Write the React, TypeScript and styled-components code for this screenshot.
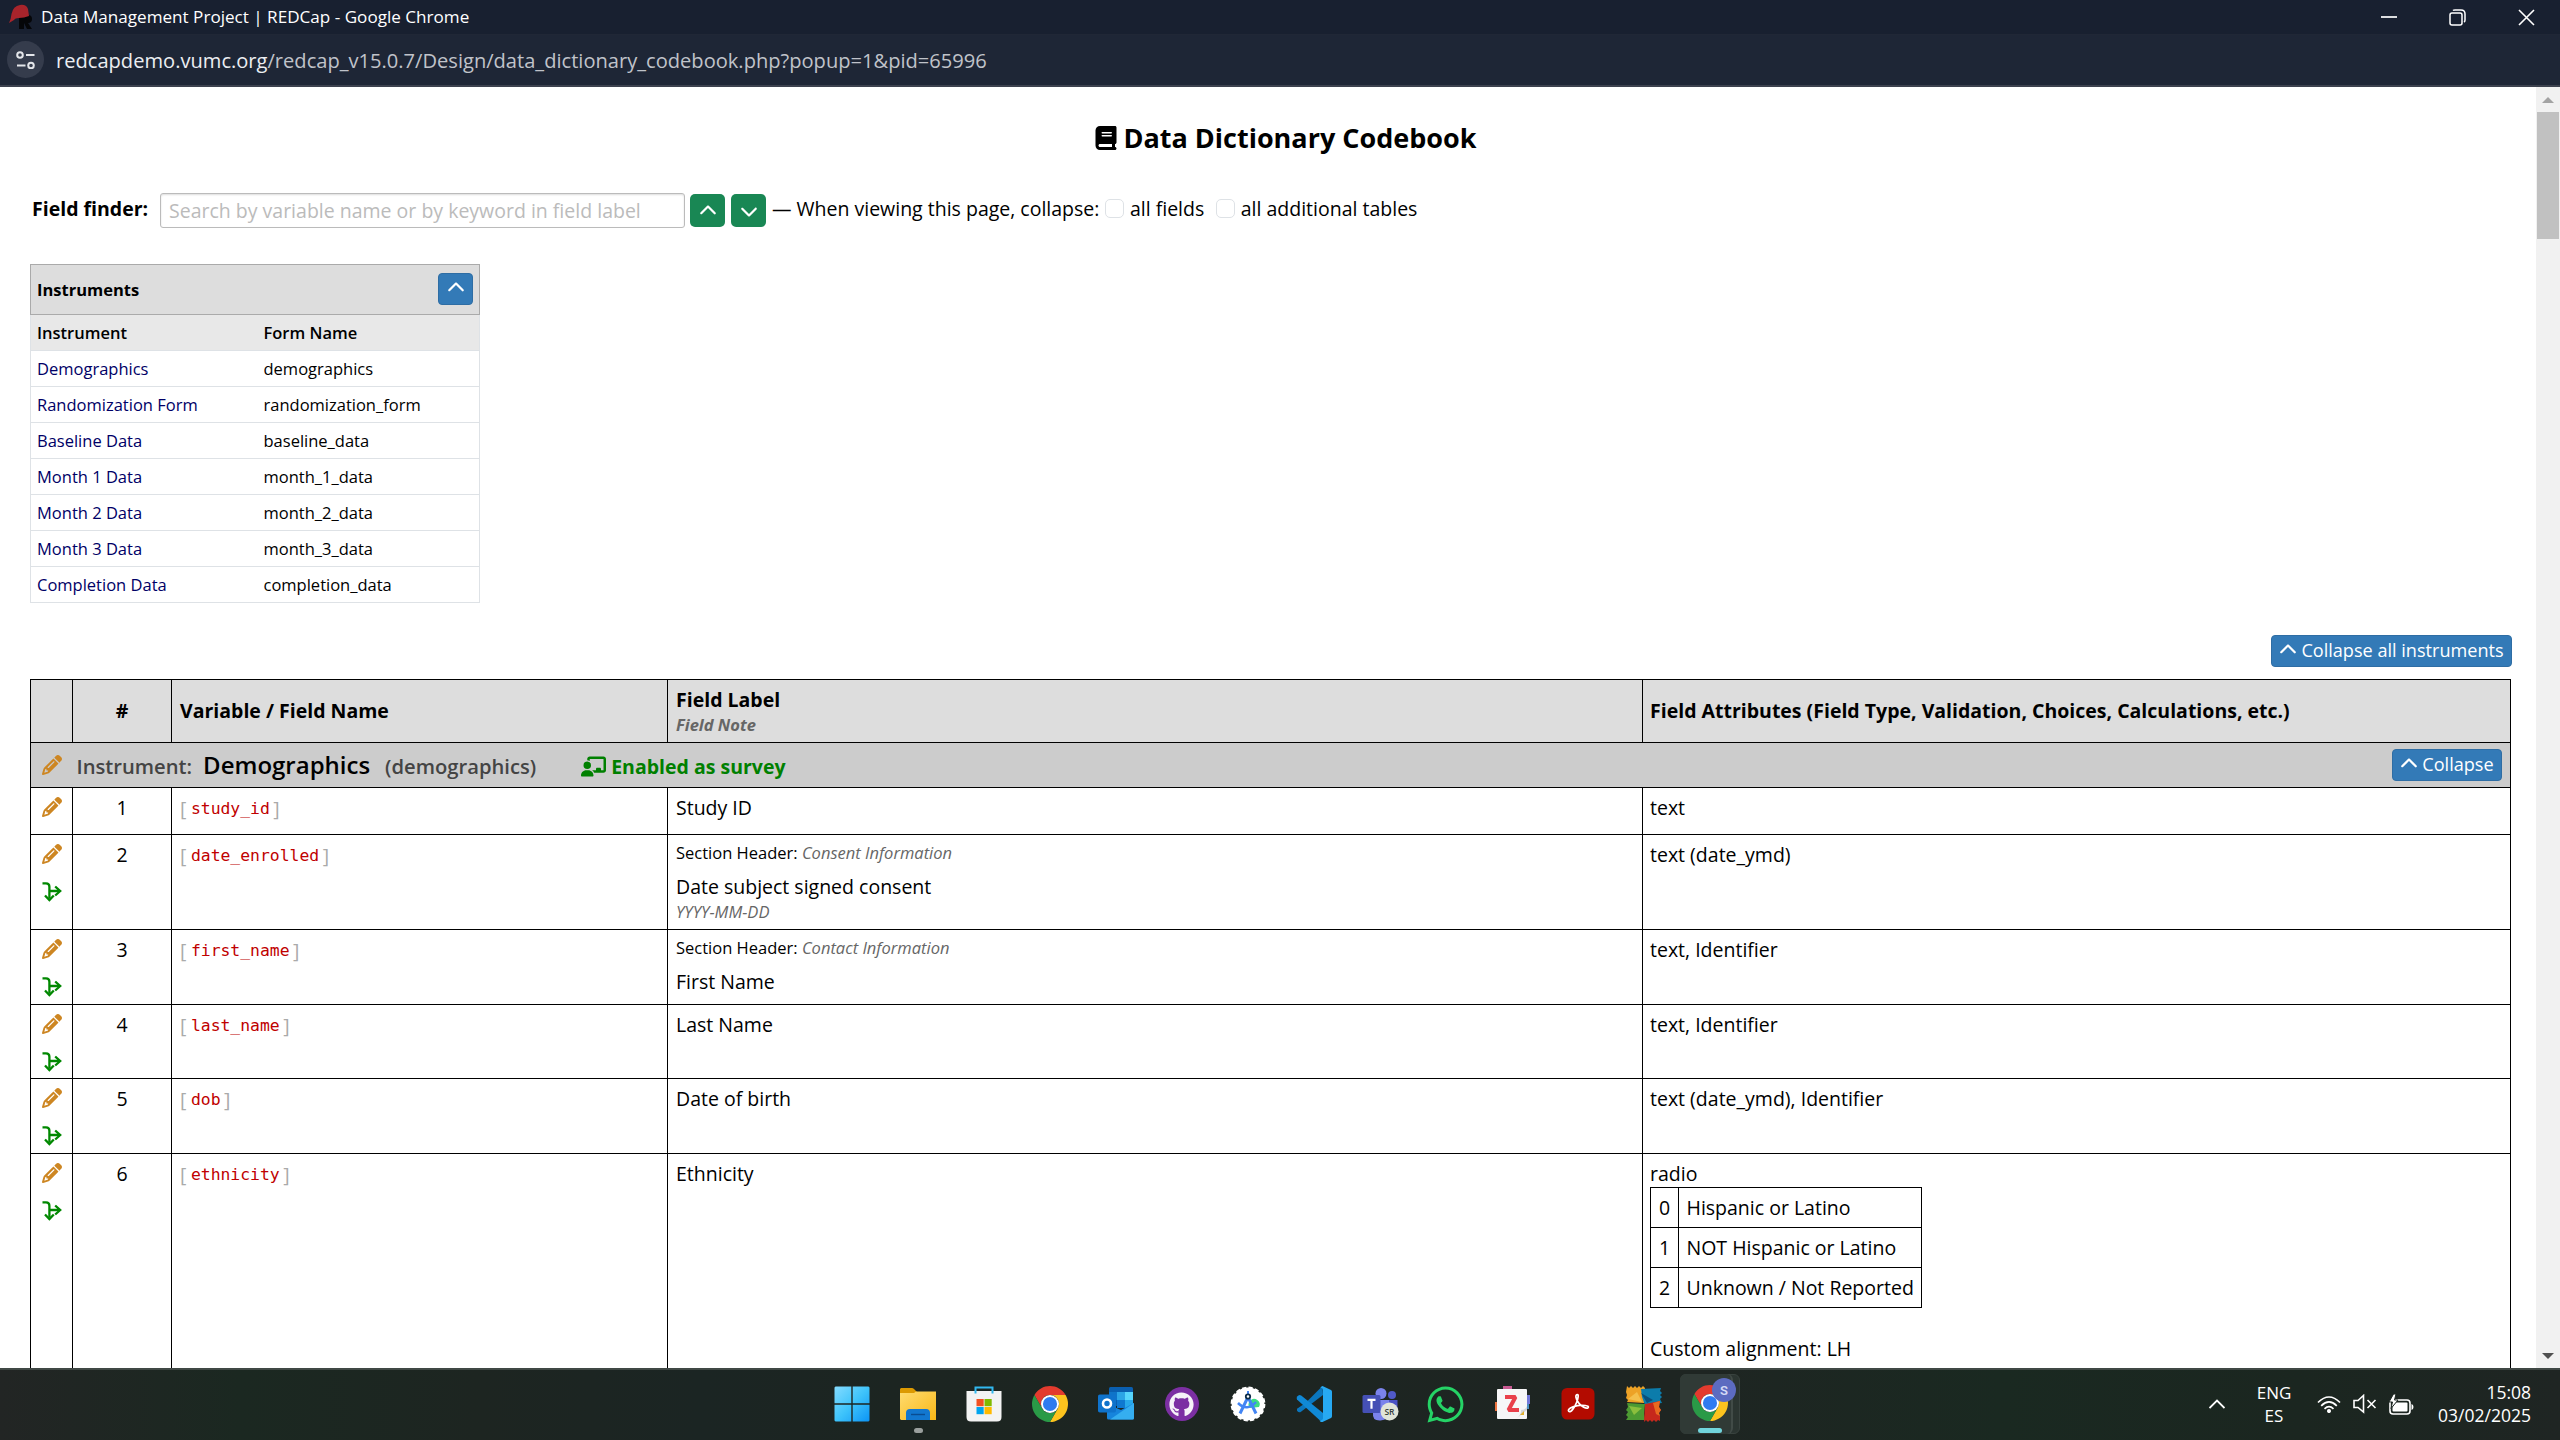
import React from "react";
import styled, { createGlobalStyle } from "styled-components";
import {
  FaBook,
  FaPencil,
  FaChevronUp,
  FaChevronDown,
  FaChalkboardUser,
  FaGithub,
  FaWhatsapp,
} from "react-icons/fa6";

const GlobalStyle = createGlobalStyle`
  * { box-sizing: border-box; }
  html, body { margin: 0; padding: 0; overflow: hidden; }
  body {
    font-family: "Open Sans", "Noto Sans", sans-serif;
    font-size: 19.5px;
    color: #000;
    background: #fff;
  }
`;

/* ---------- window frame ---------- */

const Screen = styled.div`
  width: 2560px;
  height: 1440px;
  display: flex;
  flex-direction: column;
  overflow: hidden;
`;

const TitleBar = styled.header`
  height: 35px;
  flex: none;
  display: flex;
  align-items: center;
  justify-content: space-between;
  background: #182030;
  color: #fff;
  border-bottom: 1px solid #202736;
`;

const WindowTitle = styled.div`
  display: flex;
  align-items: center;
  gap: 8px;
  padding-left: 9px;
  font-size: 17.1px;
  line-height: 36px;
  white-space: nowrap;
`;

const WindowControls = styled.div`
  display: flex;
  align-items: center;
  gap: 52px;
  padding-right: 25px;
`;

const AddressBar = styled.div`
  height: 52px;
  flex: none;
  display: flex;
  align-items: center;
  gap: 12px;
  padding: 0 0 1px 7px;
  background: #1e2636;
  border-bottom: 2px solid #3c414e;
`;

const SiteInfo = styled.div`
  width: 37px;
  height: 37px;
  border-radius: 50%;
  background: #353c4c;
  display: grid;
  place-items: center;
`;

const Url = styled.div`
  font-size: 20.1px;
  padding-top: 1px;
  color: #c0c3ca;
  white-space: nowrap;
`;

const UrlHost = styled.span`
  color: #eceef2;
`;

const Viewport = styled.div`
  height: 1281px;
  flex: none;
  display: flex;
  overflow: hidden;
`;

const Page = styled.main`
  flex: 1;
  min-width: 0;
  padding-left: 30px;
  padding-right: 25px;
  overflow: hidden;
`;

const Scrollbar = styled.div`
  width: 24px;
  flex: none;
  height: 100%;
  display: flex;
  flex-direction: column;
  align-items: center;
  justify-content: space-between;
  background: #f1f1f1;
`;

const ScrollStart = styled.div`
  width: 100%;
  display: flex;
  flex-direction: column;
  align-items: center;
`;

const ScrollArrow = styled.div<{ $down?: boolean }>`
  height: 25px;
  width: 24px;
  display: grid;
  place-items: center;
  &::before {
    content: "";
    border: 6px solid transparent;
    border-top-width: ${(p) => (p.$down ? "6px" : "0")};
    border-bottom-width: ${(p) => (p.$down ? "0" : "6px")};
    border-${(p) => (p.$down ? "top" : "bottom")}-color: ${(p) => (p.$down ? "#505050" : "#a3a3a3")};
  }
`;

const ScrollThumb = styled.div`
  width: 22px;
  height: 127px;
  background: #c1c1c1;
`;

/* ---------- page head ---------- */

const PageTitle = styled.h1`
  margin: 30px 0 0;
  height: 42px;
  display: flex;
  align-items: center;
  justify-content: center;
  gap: 5px;
  padding-left: 30px;
  font-size: 27px;
  font-weight: 700;
  line-height: 42px;
  white-space: nowrap;
`;

const FinderRow = styled.div`
  display: flex;
  align-items: center;
  height: 35px;
  margin-top: 34px;
  padding-left: 2px;
  white-space: nowrap;
`;

const FinderLabel = styled.label`
  width: 128px;
  font-weight: 700;
  margin-top: -4px;
`;

const FinderInput = styled.input`
  width: 525px;
  height: 35px;
  padding: 0 8px 1px;
  font: inherit;
  border: 1px solid #bbb;
  border-radius: 3px;
  box-shadow: inset 0 1px 2px #ddd;
  &::placeholder {
    color: #bbb;
    opacity: 1;
  }
`;

const StepButton = styled.button<{ $gap: number }>`
  width: 35px;
  height: 33px;
  margin-left: ${(p) => p.$gap}px;
  padding: 0;
  border: 0;
  border-radius: 5px;
  background: #198754;
  color: #fff;
  display: grid;
  place-items: center;
`;

const FinderText = styled.span<{ $gap: number }>`
  margin: -4px 0 0 ${(p) => p.$gap}px;
`;

const CheckBox = styled.span<{ $gap: number }>`
  width: 19px;
  height: 19px;
  margin: -4px 0 0 ${(p) => p.$gap}px;
  border: 1px solid #dee2e6;
  border-radius: 5px;
`;

/* ---------- buttons ---------- */

const BlueButton = styled.button<{ $width: number }>`
  width: ${(p) => p.$width}px;
  height: 32px;
  flex: none;
  display: flex;
  align-items: center;
  justify-content: center;
  gap: 4px;
  padding: 0 0 2px;
  font: inherit;
  font-size: 18.1px;
  font-weight: 400;
  color: #fff;
  background: #337ab7;
  border: 1px solid #2e6da4;
  border-radius: 4px;
  white-space: nowrap;
`;

/* ---------- instruments ---------- */

const Instruments = styled.section`
  width: 450px;
  margin-top: 36px;
  font-size: 16.5px;
`;

const InstrumentsHead = styled.div`
  height: 51px;
  display: flex;
  align-items: center;
  justify-content: space-between;
  padding: 0 6px 1px 6px;
  background: #ddd;
  border: 1px solid #aaa;
  font-weight: 700;
`;

const InstrumentRow = styled.div<{ $head?: boolean }>`
  height: 36px;
  display: grid;
  grid-template-columns: 226.5px 1fr;
  align-items: center;
  padding: 0 0 0 6px;
  border: 1px solid #dee2e6;
  border-top: 0;
  background: ${(p) => (p.$head ? "#e8e8e8" : "#fff")};
  font-weight: ${(p) => (p.$head ? 600 : 400)};
`;

const InstrumentLink = styled.a`
  color: #000066;
`;

/* ---------- codebook table ---------- */

const Toolbar = styled.div`
  display: flex;
  justify-content: flex-end;
  margin: 32px -1px 12px 0;
`;

const Codebook = styled.section`
  width: 2481px;
  border-top: 1px solid #000;
  border-left: 1px solid #000;
`;

const FieldRow = styled.div<{ $height: number; $head?: boolean }>`
  height: ${(p) => p.$height}px;
  display: grid;
  grid-template-columns: 42px 99px 496px 975px 868px;
  border-bottom: 1px solid #000;
  background: ${(p) => (p.$head ? "#ddd" : "#fff")};
  font-weight: ${(p) => (p.$head ? 700 : 400)};
`;

const Cell = styled.div<{ $center?: boolean; $middle?: boolean; $last?: boolean }>`
  border-right: 1px solid #000;
  padding: ${(p) => (p.$middle ? "0 8px 2px" : "5px 8px 0")};
  padding-left: ${(p) => (p.$last ? 7 : 8)}px;
  text-align: ${(p) => (p.$center ? "center" : "left")};
  line-height: 29px;
  display: flex;
  flex-direction: column;
  justify-content: ${(p) => (p.$middle ? "center" : "flex-start")};
  min-width: 0;
`;

const IconCell = styled.div`
  border-right: 1px solid #000;
  padding: 9px 0 0 11px;
  display: flex;
  flex-direction: column;
  gap: 18px;
`;

const Pencil = styled(FaPencil)`
  width: 20px;
  height: 20px;
  color: #cd8622;
  flex: none;
`;

const Variable = styled.div`
  display: flex;
  gap: 3.5px;
  padding-top: 1px;
  color: #aaa;
`;

const VariableName = styled.code`
  margin-left: 1px;
  font-family: "DejaVu Sans Mono", monospace;
  font-size: 16.4px;
  color: #c00000;
`;

const HeadNote = styled.span`
  font-size: 16.5px;
  font-style: italic;
  color: #666;
  line-height: 21px;
`;

const HeadLabel = styled.span`
  line-height: 28px;
`;

const SectionHeader = styled.div`
  font-size: 16.5px;
  line-height: 25px;
  margin: -0.5px 0 7px;
`;

const SectionName = styled.i`
  color: #666;
`;

const FieldNote = styled.div`
  font-size: 16.5px;
  font-style: italic;
  color: #666;
  line-height: 22px;
`;

const InstrumentBar = styled.div`
  height: 45px;
  display: flex;
  align-items: center;
  padding: 0 8px 0 11px;
  background: #ccc;
  border-right: 1px solid #000;
  border-bottom: 1px solid #000;
  white-space: nowrap;
`;

const BarMuted = styled.span<{ $gap: number }>`
  margin: 2px 0 0 ${(p) => p.$gap}px;
  font-size: 20.2px;
  font-weight: 600;
  color: #444;
`;

const BarName = styled.span`
  margin: -1px 0 0 11px;
  font-size: 24px;
  font-weight: 600;
`;

const SurveyFlag = styled.span`
  margin-left: 45px;
  margin-right: auto;
  display: flex;
  align-items: center;
  gap: 5px;
  padding-top: 2px;
  font-weight: 700;
  color: #008000;
`;

const Choices = styled.div`
  width: 272px;
  margin-top: -1px;
  border: 1px solid #000;
  border-bottom: 0;
`;

const Choice = styled.div`
  height: 40px;
  display: grid;
  grid-template-columns: 28px 1fr;
  border-bottom: 1px solid #000;
  line-height: 39px;
  white-space: nowrap;
`;

const ChoiceCode = styled.span`
  border-right: 1px solid #000;
  text-align: center;
`;

const ChoiceLabel = styled.span`
  padding-left: 7.5px;
`;

const Extra = styled.div`
  margin-top: 26px;
`;

/* ---------- taskbar ---------- */

const Taskbar = styled.footer`
  flex: 1;
  display: flex;
  align-items: flex-start;
  justify-content: space-between;
  border-top: 2px solid #404845;
  background: linear-gradient(90deg, #222524 0, #1b2821 240px, #1d2521 480px, #1b2523 700px, #1c2521 900px, #1e2522 1700px, #1a2921 2000px, #1b2620 2300px, #1f2523 2560px);
  color: #fff;
  padding-left: 818.5px;
`;

const Apps = styled.nav`
  display: flex;
  height: 70px;
`;

const AppSlot = styled.div`
  position: relative;
  width: 66px;
  height: 68px;
  display: flex;
  align-items: center;
  justify-content: center;
`;

const ActiveTile = styled.div`
  width: 60px;
  height: 60px;
  margin: 4px 0 0 3.5px;
  display: flex;
  justify-content: center;
  align-items: center;
  border-radius: 6px;
  background: #2b3531;
  border: 1px solid #38423e;
  position: relative;
  &::before {
    content: "";
    position: absolute;
    inset: -1px 6px -1px -1px;
    border-radius: 6px;
    border-right: 2px solid #414b47;
    background: #303a36;
  }
  &::after {
    content: "";
    position: absolute;
    left: 17px;
    bottom: 0;
    width: 24px;
    height: 5px;
    border-radius: 3px;
    background: #71d4dc;
  }
  svg {
    position: relative;
    top: -4px;
    left: 4px;
  }
`;

const RunningDot = styled.div`
  position: absolute;
  left: 29px;
  bottom: 5px;
  width: 9px;
  height: 5px;
  border-radius: 3px;
  background: #9a9f9d;
`;

const Tray = styled.div`
  display: flex;
  align-items: center;
  height: 68px;
  padding-right: 29px;
`;

const TrayText = styled.div<{ $align: string; $width: number; $size: number }>`
  width: ${(p) => p.$width}px;
  text-align: ${(p) => p.$align};
  font-size: ${(p) => p.$size}px;
  line-height: 23.5px;
  white-space: nowrap;
`;

const TrayIcons = styled.div`
  display: flex;
  align-items: center;
  gap: 12px;
  margin: 0 21px 0 -6px;
`;

/* ---------- drawings ---------- */

const BranchIcon = () => (
  <svg width="20" height="20" viewBox="0 0 20 20" fill="none" stroke="#008800" strokeWidth="2.3">
    <path d="M0.5 1.3H4q3.4 0 3.4 3.4V16.5M7.4 9H17" />
    <path d="M3 13.5l4.4 4.6 4.4-4.6M13.2 4.500l5 4.600-5 4.400" />
  </svg>
);

const RedcapLogo = () => (
  <svg width="24" height="26" viewBox="0 0 24 26">
    <path d="M11 11h8q4 0 4 4t-4 4l4 6h-5l-3-6v6h-5V13z" fill="#050608" />
    <path d="M0 19Q2 15 2.500 10 4 2 11 1q6-1 8 4l1 7q-5 2-10 2-4 0-5 2z" fill="#a8242b" />
  </svg>
);

const TuneIcon = () => (
  <svg width="19" height="18" viewBox="0 0 19 18" fill="none" stroke="#e4e6ea" strokeWidth="2">
    <circle cx="4" cy="4" r="2.800" />
    <path d="M10 4h8.500M1 14.500h8.500" />
    <circle cx="15" cy="14.500" r="2.800" />
  </svg>
);

const MinimizeIcon = () => (
  <svg width="16" height="16" viewBox="0 0 16 16">
    <path d="M0 8h16" stroke="#fff" strokeWidth="1.700" />
  </svg>
);

const RestoreIcon = () => (
  <svg width="17" height="17" viewBox="0 0 17 17" fill="none" stroke="#fff" strokeWidth="1.500">
    <rect x="1" y="4" width="12" height="12" rx="2" />
    <path d="M4 1.500Q4.500 1 6 1h6q4 0 4 4v6q0 1.500-1 2" />
  </svg>
);

const CloseIcon = () => (
  <svg width="17" height="17" viewBox="0 0 17 17">
    <path d="M1 1l15 15M16 1L1 16" stroke="#fff" strokeWidth="1.600" />
  </svg>
);

const StartIcon = () => (
  <svg width="36" height="36" viewBox="0 0 36 36">
    <defs>
      <linearGradient id="win" x1="0" y1="0" x2="36" y2="36" gradientUnits="userSpaceOnUse">
        <stop offset="0" stopColor="#86dcff" />
        <stop offset="0.5" stopColor="#3fc4fb" />
        <stop offset="1" stopColor="#0a93f5" />
      </linearGradient>
    </defs>
    <path fill="url(#win)" d="M1.500.5H17.300V17.300H.500V1.500zM18.700.500H34.500l1 1V17.300H18.700zM.500 18.700H17.300V35.500H1.500l-1-1zM18.700 18.700H35.500V34.500l-1 1H18.700z" />
  </svg>
);

const FolderIcon = () => (
  <svg width="36" height="36" viewBox="0 0 36 36">
    <defs>
      <linearGradient id="fold" x1="0" y1="0" x2="1" y2="1">
        <stop offset="0" stopColor="#ffdc70" />
        <stop offset="1" stopColor="#f9b716" />
      </linearGradient>
    </defs>
    <path d="M1 2h11q1 0 2 1l3 3-4 5H0V3z" fill="#dc9a02" />
    <path d="M0 7h14l2-1.500h20V34H1l-1-1z" fill="url(#fold)" />
    <path d="M6 34v-7q0-4 4-4h16q4 0 4 4v7z" fill="#1277cf" />
    <path d="M11 28.500h14" stroke="#0a4c91" strokeWidth="1.400" />
  </svg>
);

const StoreIcon = () => (
  <svg width="36" height="36" viewBox="0 0 36 36">
    <path d="M9.500 7V1.500h17V7" fill="none" stroke="#31b8ef" strokeWidth="2" />
    <path d="M.500 5h35v26q0 4.500-4.500 4.500H5Q.500 35.500.500 31z" fill="#f3f3f3" />
    <path d="M10.500 13h7.200v7.200h-7.200z" fill="#f25022" />
    <path d="M18.500 13h7.200v7.200h-7.200z" fill="#7fba00" />
    <path d="M10.500 21h7.200v7.200h-7.200z" fill="#00a4ef" />
    <path d="M18.500 21h7.200v7.200h-7.200z" fill="#ffb900" />
    <path d="M9.500 5v2.500M26.500 5v2.500" stroke="#31b8ef" strokeWidth="2" />
  </svg>
);

const ChromeShapes = () => (
  <>
    <path d="M3.220 12A24 24 0 0 1 44.780 12H24A12 12 0 0 0 13.600 30z" fill="#e33b2e" />
    <path d="M44.780 12A24 24 0 0 1 24 48L34.400 30A12 12 0 0 0 24 12z" fill="#fcc31e" />
    <path d="M24 48A24 24 0 0 1 3.220 12L13.600 30A12 12 0 0 0 34.400 30z" fill="#2a9a47" />
    <circle cx="24" cy="24" r="12" fill="#fff" />
    <circle cx="24" cy="24" r="9.400" fill="#2f7bf0" />
  </>
);

const ChromeIcon = () => (
  <svg width="36" height="36" viewBox="0 0 48 48">
    <ChromeShapes />
  </svg>
);

const ChromeProfileIcon = () => (
  <svg width="44" height="46" viewBox="0 0 44 46">
    <g transform="translate(0 8) scale(.75)">
      <ChromeShapes />
    </g>
    <circle cx="32" cy="13" r="12" fill="#5c6bc0" />
    <text x="32" y="17.500" textAnchor="middle" fontSize="13" fontWeight="600" fill="#d5daf5" fontFamily="Roboto, sans-serif">
      S
    </text>
  </svg>
);

const OutlookIcon = () => (
  <svg width="36" height="36" viewBox="0 0 36 36">
    <path d="M11 2.500q0-1.500 1.500-1.500h21q1.500 0 1.500 1.500V20H11z" fill="#0a5fb0" />
    <path d="M11 6h8v8h-8z" fill="#0f74c8" />
    <path d="M19 6h8v8h-8z" fill="#2ba4e6" />
    <path d="M27 6h8v8h-8z" fill="#56d5fc" />
    <path d="M19 14h8v8h-8z" fill="#0f78d0" />
    <path d="M27 14h8v8h-8z" fill="#28a8ea" />
    <path d="M9 18l14 6 13-7v15q0 1.500-1.500 1.500H10.500Q9 33.500 9 32z" fill="#1684dc" />
    <path d="M36 17L12 33.500h22.500q1.500 0 1.500-1.500z" fill="#35aef0" />
    <rect x="0" y="8.500" width="18" height="18" rx="1.800" fill="#0f73cc" />
    <circle cx="9" cy="17.500" r="4" fill="none" stroke="#fff" strokeWidth="2.600" />
  </svg>
);

const GithubDisc = styled.div`
  width: 34px;
  height: 34px;
  border-radius: 50%;
  display: grid;
  place-items: center;
  color: #f6f2f8;
  background: #7c2fa3;
`;

const AndroidStudioIcon = () => (
  <svg width="36" height="36" viewBox="0 0 36 36">
    <circle cx="18" cy="18" r="16.400" fill="#fff" stroke="#fff" strokeWidth="2" strokeDasharray="4.200 2.240" />
    <path d="M20 22a5.500 5.500 0 1 1 9-1z" fill="#3ddc84" />
    <path d="M18 11L10 27.500M18 11l8 16.500" stroke="#4285f4" strokeWidth="3" />
    <path d="M8 17q9 9 18-1" fill="none" stroke="#4285f4" strokeWidth="2.600" />
    <path d="M18 5v4" stroke="#4285f4" strokeWidth="2" />
    <circle cx="18" cy="10.500" r="2.200" fill="#fff" stroke="#0b2b45" strokeWidth="1.800" />
  </svg>
);

const VsCodeIcon = () => (
  <svg width="36" height="36" viewBox="0 0 36 36">
    <path d="M26.500 0L9.500 17 1 22.800v2q2 2.500 4 1L27 9z" fill="#0b76bd" />
    <path d="M1.200 10.500q1.800-2.500 4-1L27 27v9l-3.500-2L1 13.500q-.800-1.500.200-3z" fill="#1089d6" />
    <path d="M26.500 0L35 4q1 .500 1 1.800v24.500q0 1.200-1 1.700l-8.500 4q-2 .500-3-1.500 3 .500 3.500-2V4Q26.500 1 24 1.500z" fill="#27a9f2" />
  </svg>
);

const TeamsIcon = () => (
  <svg width="38" height="36" viewBox="0 0 38 36">
    <circle cx="20" cy="7.500" r="5.500" fill="#7b83eb" />
    <circle cx="31" cy="9" r="4" fill="#5059c9" />
    <path d="M26 14h10.500v10q0 5-5 5T26 24z" fill="#4a52c4" />
    <path d="M12 14h16v11q0 9-8.500 9.500T12 27z" fill="#7b83eb" />
    <rect x="1.500" y="9" width="18" height="18" rx="1.500" fill="#4550b5" />
    <path d="M6.500 13.800h8M10.500 13.800v9" stroke="#fff" strokeWidth="2.200" />
    <circle cx="28.500" cy="25.500" r="9" fill="#e0e4d8" />
    <text x="28.500" y="28.800" textAnchor="middle" fontSize="8.500" fontWeight="600" fill="#38403a" fontFamily="Open Sans, sans-serif">
      SR
    </text>
  </svg>
);

const ZoteroIcon = () => (
  <svg width="36" height="36" viewBox="0 0 36 36">
    <path d="M9 0h9v5H9z" fill="#c75a92" />
    <path d="M29 9h7v9h-7z" fill="#7277d8" />
    <path d="M29 18h6v5h-6z" fill="#4a8fc2" />
    <path d="M1 16h6v9H1z" fill="#ee7440" />
    <path d="M4 3h28q1 0 1 1v28q0 1-1 1H4q-1 0-1-1V4q0-1 1-1z" fill="#f6f6f7" />
    <path d="M33 20q-1 4-6 4 1 4-5 9l11-9z" fill="#d3d4d8" />
    <path d="M27 28l3-3v4h-4z" fill="#e0b030" />
    <path d="M11 11h10.500L14.500 24H25" fill="none" stroke="#e9404b" strokeWidth="4" strokeLinejoin="bevel" />
  </svg>
);

const AcrobatIcon = () => (
  <svg width="34" height="34" viewBox="0 0 34 34">
    <rect x="0.500" y="1" width="33" height="31.500" rx="5.500" fill="#b30b00" />
    <path
      d="M16.500 7.500c-2.800 0-1.600 4.600 1 8.300 2.700 3.800 8 6.600 9.600 4.800 1.700-2-5.600-2.900-10.600-1.900-5.400 1-10.400 3.500-8.800 5.500 2 2.200 6-4 8-9 1.500-3.800 2-7.700.8-7.700z"
      fill="none"
      stroke="#fff"
      strokeWidth="1.700"
    />
  </svg>
);

const AvgIcon = () => (
  <svg width="36" height="36" viewBox="0 0 36 36">
    <path d="M1 0l2 2 2-2 2 2 2-2 2 2 2-2 2 2 2-2 2 2-1 15-17-1 1-2-2-2 1-3-1-3z" fill="#eda226" />
    <path d="M15 3l20-1-1 3 2 2-2 2 2 2-2 2 2 4-17 2-3-8z" fill="#0c7cab" />
    <path d="M1 17l18 1-1 10 1 6H0l2-3-2-2 2-3-2-2 2-3z" fill="#4c9a32" />
    <path d="M19 18l15-3-1 6 2 3-2 3 1 3v5l-2-1-2 2-2-2-2 2-2-2-2 2-2-2-2 2z" fill="#c6281c" />
    <path d="M27 17l7-2-1 6 2 3-2 3 1 3-4-2z" fill="#e86a20" />
    <path d="M2 13l14 3-5-10z" fill="#f4bf4b" />
    <path d="M3 20l13 2-8 7z" fill="#8bbf3d" />
    <path d="M15 7l6 10 6-3z" fill="#0a4f7a" />
  </svg>
);

const TrayChevron = () => (
  <svg width="16" height="10" viewBox="0 0 16 10">
    <path d="M0.500 9L8 1.500 15.500 9" fill="none" stroke="#fff" strokeWidth="1.800" />
  </svg>
);

const WifiIcon = () => (
  <svg width="24" height="18" viewBox="0 0 24 18" fill="none" stroke="#fff" strokeWidth="1.700">
    <path d="M1 7.500Q12-3.500 23 7.500M4.200 10.800q7.800-7.800 15.600 0M7.500 13.800q4.500-4.300 9 0" />
    <circle cx="12" cy="16" r="1.200" fill="#fff" />
  </svg>
);

const MutedIcon = () => (
  <svg width="24" height="20" viewBox="0 0 24 20" fill="none" stroke="#fff" strokeWidth="1.600">
    <path d="M1 6.500h4L10.500 1.500v16.500L5 13.500H1z" />
    <path d="M14.500 6l8 8M22.500 6l-8 8" />
  </svg>
);

const BatteryIcon = () => (
  <svg width="25" height="21" viewBox="0 0 25 21">
    <rect x="1" y="6" width="20" height="14" rx="3" fill="none" stroke="#fff" strokeWidth="1.600" />
    <rect x="3.500" y="8.500" width="15" height="9" rx="1" fill="#fff" />
    <path d="M22.500 10v6q2-.500 2-3t-2-3z" fill="#fff" />
    <path d="M4.500 0L0 8h3.500L2 14.500 9 6H5.500L7 0z" fill="#fff" stroke="#1c2521" strokeWidth="1" />
  </svg>
);

/* ---------- data ---------- */

const instruments = [
  ["Demographics", "demographics"],
  ["Randomization Form", "randomization_form"],
  ["Baseline Data", "baseline_data"],
  ["Month 1 Data", "month_1_data"],
  ["Month 2 Data", "month_2_data"],
  ["Month 3 Data", "month_3_data"],
  ["Completion Data", "completion_data"],
];

interface Field {
  name: string;
  label: string;
  attributes: string;
  height: number;
  section?: string;
  note?: string;
  choices?: string[];
  extra?: string;
}

const fields: Field[] = [
  { name: "study_id", label: "Study ID", attributes: "text", height: 47 },
  {
    name: "date_enrolled",
    label: "Date subject signed consent",
    attributes: "text (date_ymd)",
    height: 95,
    section: "Consent Information",
    note: "YYYY-MM-DD",
  },
  { name: "first_name", label: "First Name", attributes: "text, Identifier", height: 75, section: "Contact Information" },
  { name: "last_name", label: "Last Name", attributes: "text, Identifier", height: 74 },
  { name: "dob", label: "Date of birth", attributes: "text (date_ymd), Identifier", height: 75 },
  {
    name: "ethnicity",
    label: "Ethnicity",
    attributes: "radio",
    height: 240,
    choices: ["Hispanic or Latino", "NOT Hispanic or Latino", "Unknown / Not Reported"],
    extra: "Custom alignment: LH",
  },
];

const CodebookField = ({ field, index }: { field: Field; index: number }) => (
  <FieldRow $height={field.height}>
    <IconCell>
      <Pencil />
      {index > 0 && <BranchIcon />}
    </IconCell>
    <Cell $center>{index + 1}</Cell>
    <Cell>
      <Variable>
        [<VariableName>{field.name}</VariableName>]
      </Variable>
    </Cell>
    <Cell>
      {field.section && (
        <SectionHeader>
          Section Header: <SectionName>{field.section}</SectionName>
        </SectionHeader>
      )}
      <div>{field.label}</div>
      {field.note && <FieldNote>{field.note}</FieldNote>}
    </Cell>
    <Cell $last>
      <div>{field.attributes}</div>
      {field.choices && (
        <Choices>
          {field.choices.map((choice, code) => (
            <Choice key={choice}>
              <ChoiceCode>{code}</ChoiceCode>
              <ChoiceLabel>{choice}</ChoiceLabel>
            </Choice>
          ))}
        </Choices>
      )}
      {field.extra && <Extra>{field.extra}</Extra>}
    </Cell>
  </FieldRow>
);

export default function App() {
  return (
    <Screen>
      <GlobalStyle />
      <TitleBar>
        <WindowTitle>
          <RedcapLogo />
          Data Management Project | REDCap - Google Chrome
        </WindowTitle>
        <WindowControls>
          <MinimizeIcon />
          <RestoreIcon />
          <CloseIcon />
        </WindowControls>
      </TitleBar>
      <AddressBar>
        <SiteInfo>
          <TuneIcon />
        </SiteInfo>
        <Url>
          <UrlHost>redcapdemo.vumc.org</UrlHost>/redcap_v15.0.7/Design/data_dictionary_codebook.php?popup=1&amp;pid=65996
        </Url>
      </AddressBar>

      <Viewport>
        <Page>
          <PageTitle>
            <FaBook size={24} />
            Data Dictionary Codebook
          </PageTitle>

          <FinderRow>
            <FinderLabel>Field finder:</FinderLabel>
            <FinderInput placeholder="Search by variable name or by keyword in field label" />
            <StepButton $gap={5}>
              <FaChevronUp size={18} />
            </StepButton>
            <StepButton $gap={6}>
              <FaChevronDown size={18} />
            </StepButton>
            <FinderText $gap={6}>— When viewing this page, collapse:</FinderText>
            <CheckBox $gap={6} />
            <FinderText $gap={5.5}>all fields</FinderText>
            <CheckBox $gap={11.5} />
            <FinderText $gap={6}>all additional tables</FinderText>
          </FinderRow>

          <Instruments>
            <InstrumentsHead>
              Instruments
              <BlueButton $width={35}>
                <FaChevronUp size={18} />
              </BlueButton>
            </InstrumentsHead>
            <InstrumentRow $head>
              <span>Instrument</span>
              <span>Form Name</span>
            </InstrumentRow>
            {instruments.map(([title, form]) => (
              <InstrumentRow key={form}>
                <InstrumentLink>{title}</InstrumentLink>
                <span>{form}</span>
              </InstrumentRow>
            ))}
          </Instruments>

          <Toolbar>
            <BlueButton $width={241}>
              <FaChevronUp size={18} />
              Collapse all instruments
            </BlueButton>
          </Toolbar>

          <Codebook>
            <FieldRow $height={63} $head>
              <Cell />
              <Cell $center $middle>
                #
              </Cell>
              <Cell $middle>Variable / Field Name</Cell>
              <Cell $middle>
                <HeadLabel>Field Label</HeadLabel>
                <HeadNote>Field Note</HeadNote>
              </Cell>
              <Cell $middle $last>
                Field Attributes (Field Type, Validation, Choices, Calculations, etc.)
              </Cell>
            </FieldRow>
            <InstrumentBar>
              <Pencil />
              <BarMuted $gap={14.5}>Instrument:</BarMuted>
              <BarName>Demographics</BarName>
              <BarMuted $gap={15}>(demographics)</BarMuted>
              <SurveyFlag>
                <FaChalkboardUser size={25} />
                Enabled as survey
              </SurveyFlag>
              <BlueButton $width={110}>
                <FaChevronUp size={18} />
                Collapse
              </BlueButton>
            </InstrumentBar>
            {fields.map((field, index) => (
              <CodebookField key={field.name} field={field} index={index} />
            ))}
          </Codebook>
        </Page>
        <Scrollbar>
          <ScrollStart>
            <ScrollArrow />
            <ScrollThumb />
          </ScrollStart>
          <ScrollArrow $down />
        </Scrollbar>
      </Viewport>

      <Taskbar>
        <Apps>
          <AppSlot><StartIcon /></AppSlot>
          <AppSlot>
            <FolderIcon />
            <RunningDot />
          </AppSlot>
          <AppSlot><StoreIcon /></AppSlot>
          <AppSlot><ChromeIcon /></AppSlot>
          <AppSlot><OutlookIcon /></AppSlot>
          <AppSlot><GithubDisc><FaGithub size={25} /></GithubDisc></AppSlot>
          <AppSlot><AndroidStudioIcon /></AppSlot>
          <AppSlot><VsCodeIcon /></AppSlot>
          <AppSlot><TeamsIcon /></AppSlot>
          <AppSlot><FaWhatsapp size={41} color="#25d366" /></AppSlot>
          <AppSlot><ZoteroIcon /></AppSlot>
          <AppSlot><AcrobatIcon /></AppSlot>
          <AppSlot><AvgIcon /></AppSlot>
          <ActiveTile><ChromeProfileIcon /></ActiveTile>
        </Apps>
        <Tray>
          <TrayChevron />
          <TrayText $align="center" $width={98} $size={17}>
            ENG
            <br />
            ES
          </TrayText>
          <TrayIcons>
            <WifiIcon />
            <MutedIcon />
            <BatteryIcon />
          </TrayIcons>
          <TrayText $align="right" $width={96} $size={17.5}>
            15:08
            <br />
            03/02/2025
          </TrayText>
        </Tray>
      </Taskbar>
    </Screen>
  );
}
